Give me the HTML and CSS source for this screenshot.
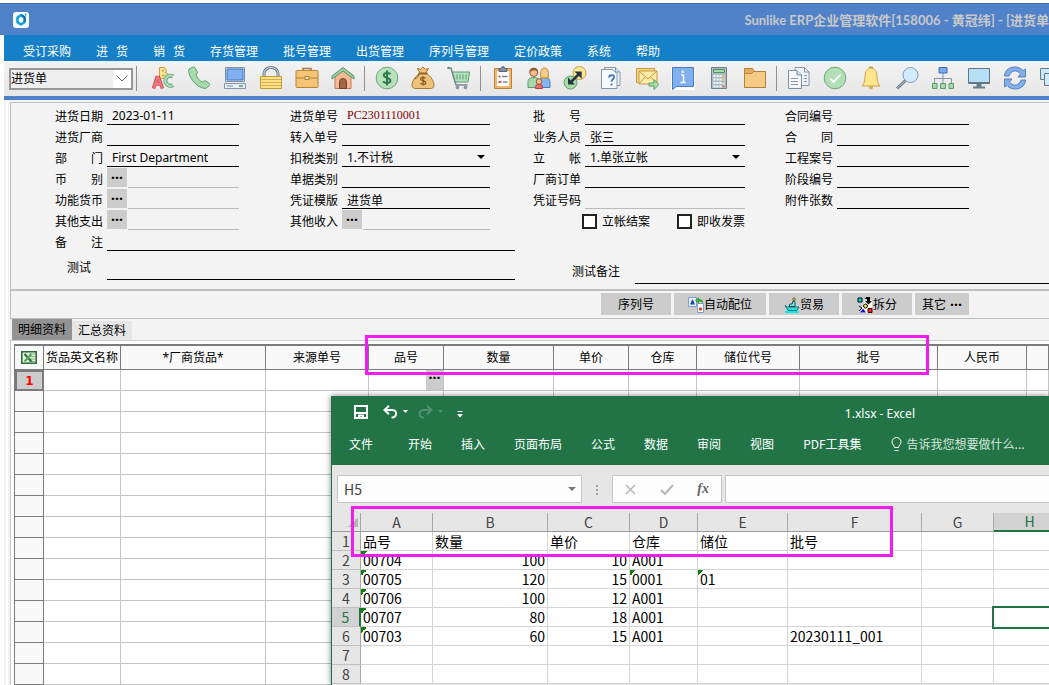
FILE: index.html
```html
<!DOCTYPE html>
<html lang="zh-CN">
<head>
    <meta charset="UTF-8">
    <meta name="viewport" content="width=device-width, initial-scale=1.0">
    <title>Sunlike ERP - 进货单</title>
    <link rel="stylesheet" href="styles.css">
</head>
<body>
    <header class="titlebar">
        <svg class="app-logo" viewBox="0 0 16 16">
            <rect width="16" height="16" rx="3" fill="#f4fcff"/>
            <path d="M8 3.2 11.500 5.500v4.700L8 12.500 4.500 10.200V5.500Z" fill="none" stroke="#18a0d8" stroke-width="2.600" stroke-linejoin="round"/>
            <path d="M8.500 3 11.800 5.200v4.500" fill="none" stroke="#1667b8" stroke-width="1.800"/>
            <circle cx="12.600" cy="2.600" r="1.100" fill="#25b8c8"/>
        </svg>
        <span class="titlebar-text">Sunlike ERP企业管理软件[158006 - 黄冠纬] - [进货单</span>
    </header>

    <div class="workspace">
        <nav class="menu">
            <button>受订采购</button>
            <button class="spread">进 货</button>
            <button class="spread">销 货</button>
            <button>存货管理</button>
            <button>批号管理</button>
            <button>出货管理</button>
            <button>序列号管理</button>
            <button>定价政策</button>
            <button>系统</button>
            <button>帮助</button>
        </nav>

        <div class="toolbar">
            <div class="module-select">
                <select aria-label="单据"><option>进货单</option></select>
                <svg viewBox="0 0 12 7"><path d="M.5.5 6 6 11.500.5" fill="none" stroke="#666"/></svg>
            </div>
            <span class="sep"></span>
            <button class="tool" aria-label="拼写">
                <svg viewBox="0 0 24 24" fill="none" stroke-linejoin="round">
                    <path d="M8.500 1.500h4.500a2.800 2.800 0 0 1 1 5 3 3 0 0 1-.5 6H8.500Z" fill="#fbe596" stroke="#caa03c"/>
                    <path d="M11 4.500h2M11 9.500h2.500" stroke="#caa03c" stroke-width="1.500"/>
                    <path d="M22 10.500a5 5 0 1 0 0 8.500" stroke="#5fa777" stroke-width="4"/>
                    <path d="M22 10.500a5 5 0 1 0 0 8.500" stroke="#b5dfba" stroke-width="2"/>
                    <path d="M2.500 22.500 6.500 10M11.500 22.500 7 10M4.500 18H10" stroke="#c94b58" stroke-width="3.600"/>
                    <path d="M2.700 22 6.600 10.500M11.200 22 7 10.500M4.500 18H10" stroke="#f07a80" stroke-width="1.800"/>
                </svg>
            </button>
            <button class="tool" aria-label="电话">
                <svg viewBox="0 0 24 24"><path d="M5 1.500 2 3C0 8 8 22 18.500 22.500L22 20c1-1 .8-2-.2-3l-3-2c-1.300-.8-2.200.2-3 1.200-3-1-6-4.500-6.800-8 1-.4 1.700-1.200 1.300-2.500L8.200 2.200C7.500.8 6 .8 5 1.500Z" fill="#a6dbae" stroke="#5f9f74"/></svg>
            </button>
            <button class="tool" aria-label="电脑">
                <svg viewBox="0 0 24 24">
                    <path d="M2.500 1.500h19v14h-19Z" fill="#dfe8f3" stroke="#7c8ea8"/>
                    <path d="M4 3h16v11H4Z" fill="#7fb1f2" stroke="#3f74bd"/>
                    <path d="M1.500 17.500h21v5h-21Z" fill="#e7edf5" stroke="#8495ac"/>
                    <path d="M4 20h6" stroke="#7788a0"/><path d="M16 20h4" stroke="#57a365" stroke-width="1.500"/>
                </svg>
            </button>
            <button class="tool" aria-label="锁定">
                <svg viewBox="0 0 24 24">
                    <path d="M5 11V7.500a7 6 0 0 1 14 0V11" fill="none" stroke="#6d7f8f" stroke-width="3"/>
                    <path d="M5 11V7.500a7 6 0 0 1 14 0V11" fill="none" stroke="#d5e2ec"/>
                    <path d="M1.500 10.500h21v12h-21Z" fill="#ffe18c" stroke="#c49a38"/>
                    <path d="M2 13.500h20M2 16.500h20M2 19.500h20" stroke="#d9ac4a"/>
                </svg>
            </button>
            <button class="tool" aria-label="公文包">
                <svg viewBox="0 0 24 24">
                    <path d="M8 5V2.500h8V5" fill="none" stroke="#a77a39" stroke-width="1.500"/>
                    <rect x="1" y="4.500" width="22" height="17" rx="1" fill="#f4c477" stroke="#b58236"/>
                    <path d="M1 12h22" stroke="#b58236"/><path d="M10 10.500h4v3h-4Z" fill="#fff0b9" stroke="#a77a39"/>
                </svg>
            </button>
            <button class="tool" aria-label="首页">
                <svg viewBox="0 0 24 24">
                    <path d="M4 10 12 3.500 20 10V22.500H4Z" fill="#f7b894" stroke="#c67855"/>
                    <path d="M8.500 22.500V16a3.500 3.500 0 0 1 7 0v6.500Z" fill="#a16845" stroke="#70452f"/>
                    <path d="M1 10 12 1.500 23 10v3L12 5 1 13Z" fill="#9bd0a4" stroke="#5c946a"/>
                </svg>
            </button>
            <span class="sep"></span>
            <button class="tool" aria-label="货款">
                <svg viewBox="0 0 24 24">
                    <circle cx="12" cy="12" r="10.800" fill="#b9e2bb" stroke="#66a87b"/>
                    <path d="M15.500 8.200C14.500 6.500 8.800 6.200 8.800 9.200c0 3 6.600 2 6.600 5.400 0 3.200-6 3-7.200.6M12 4.500v15" fill="none" stroke="#2f7a50" stroke-width="2"/>
                </svg>
            </button>
            <button class="tool" aria-label="费用">
                <svg viewBox="0 0 24 24">
                    <path d="M9 7 6.500 2.500l3 .8L12 1l2.500 2.300 3-.8L15 7c3 2 8 7 8 12 0 3-2 3.500-4 3.500H5c-2 0-4-.5-4-3.500 0-5 5-10 8-12Z" fill="#efc27a" stroke="#a87835"/>
                    <path d="M7.500 7.500h9" stroke="#946426" stroke-width="2"/><path d="M8 8c-1 3-2 4-4 5" fill="none" stroke="#7c552a"/>
                    <path d="M14.500 12.300c-1-1.300-5-1.200-5 .8s5.200 1.200 5.200 3.600c0 2.100-4.200 2-5.400.4M12 10v9.500" fill="none" stroke="#885b24" stroke-width="1.300"/>
                </svg>
            </button>
            <button class="tool" aria-label="购物车">
                <svg viewBox="0 0 24 24">
                    <path d="M5 6h17.500l-1.500 10H8Z" fill="#b6e1bd" stroke="#5b9f70"/>
                    <path d="M10 8.500v5M13 8.500v5M16 8.500v5M19 8.500v5" stroke="#5b9f70"/>
                    <path d="M1 2h3l5 17h11.500" fill="none" stroke="#778895" stroke-width="1.500"/><circle cx="1.500" cy="2" r="1.300" fill="#5b9f70"/>
                    <circle cx="10.500" cy="21.500" r="1.800" fill="#8695a3"/><circle cx="18.500" cy="21.500" r="1.800" fill="#8695a3"/>
                </svg>
            </button>
            <span class="sep"></span>
            <button class="tool" aria-label="清单">
                <svg viewBox="0 0 24 24">
                    <path d="M3.500 2.500h17v20h-17Z" fill="#f2b66d" stroke="#bd813b"/><path d="M6 5h12v15H6Z" fill="#fff"/>
                    <path d="M8 2.500h2L11 .8h2l1 1.700h2v3H8Z" fill="#8293a8" stroke="#56677e"/>
                    <path d="M7.500 10.500h2M7.500 16h3" stroke="#dc5a50" stroke-width="2"/><path d="M11 10.500h5.500M12 16h4.500" stroke="#7485a0" stroke-width="1.300"/>
                </svg>
            </button>
            <button class="tool" aria-label="人员">
                <svg viewBox="0 0 24 24">
                    <path d="M1 21.500v-6c0-3 3-4 6-4s5 1 5 4v6Z" fill="#a5d8aa" stroke="#5a9c6b"/>
                    <path d="M12.500 21.500v-6c0-3 2-4 5-4s5.500 1 5.500 4v6Z" fill="#86b4ef" stroke="#4f7bb8"/>
                    <path d="M14 12c-1-6 0-10 3.500-10S22 6 21 12Z" fill="#f4ce64" stroke="#b88b30"/>
                    <circle cx="6.800" cy="6.500" r="4" fill="#f5bc93" stroke="#9a5c35"/><path d="M2.500 7C1.500 0 12 0 11 7L9 4.500H5Z" fill="#955b37"/>
                    <circle cx="17.500" cy="7" r="3" fill="#f8c9a2"/>
                    <path d="M8.500 22.500c0-4 1.500-4.500 3.500-4.500s3.500.5 3.500 4.500Z" fill="#e76f6f" stroke="#af4048"/>
                    <circle cx="12" cy="15.500" r="2.800" fill="#f5bc93" stroke="#9a5c35"/>
                </svg>
            </button>
            <button class="tool" aria-label="转换">
                <svg viewBox="0 0 24 24">
                    <circle cx="16.500" cy="7" r="6.500" fill="#fbe695" stroke="#c6a14b"/><circle cx="7.500" cy="16.500" r="6.500" fill="#a9dcad" stroke="#5fa172"/>
                    <path d="M8 16 16 8" stroke="#27363f" stroke-width="2.500"/><path d="M11.500 5.500h7.200v7.200ZM5 11.500v7h7Z" fill="#27363f"/>
                </svg>
            </button>
            <button class="tool" aria-label="说明">
                <svg viewBox="0 0 24 24">
                    <path d="M5.500 1.500h11l4.500 4.500v13.500H5.500Z" fill="#edf3f9" stroke="#8496aa"/><path d="M2.500 3.500h11l4.500 4v15H2.500Z" fill="#f6f9fd" stroke="#8496aa"/><path d="M16.500 1.500V6H21" fill="#d5e1ed" stroke="#8496aa"/>
                    <path d="M10 11.500c.3-3.500 6-3 5 .2-.5 1.500-2.500 1.700-2.500 4M12.500 17.500v2" fill="none" stroke="#4174c6" stroke-width="1.800"/>
                </svg>
            </button>
            <button class="tool" aria-label="邮件">
                <svg viewBox="0 0 24 24">
                    <path d="M1.500 2.500h18v14h-18Z" fill="#f8d67e" stroke="#c69b44"/><path d="M4 5h18v13H4Z" fill="#ffebaa" stroke="#c69b44"/>
                    <path d="m4 5 9 8 9-8M4 18l6-7M22 18l-6-7" fill="none" stroke="#c69b44"/>
                    <path d="M14 17h5v-3.500l5 5-5 5V20h-5Z" fill="#a8dda8" stroke="#5aa068"/>
                </svg>
            </button>
            <button class="tool" aria-label="信息">
                <svg viewBox="0 0 24 24">
                    <path d="M0 1h24v23H0Z" fill="#fff"/><path d="M1.500 1.500h21v19H5.500l-4 3Z" fill="#80b1ee" stroke="#447cc5"/>
                    <path d="M10 9h2.500v7M9.500 16.500h5" fill="none" stroke="#fff" stroke-width="1.500"/><circle cx="11.800" cy="5.800" r="1.200" fill="#fff"/>
                </svg>
            </button>
            <button class="tool" aria-label="计算器">
                <svg viewBox="0 0 24 24">
                    <path d="M4.500 1.500h15v21h-15Z" fill="#acbdc9" stroke="#6c7f8d"/><path d="M6.500 3.500h11v3h-11Z" fill="#a7dba4" stroke="#568f61"/>
                    <path d="M6.500 10h11M6.500 13.500h11M6.500 17h11M6.500 20.500h11" stroke="#f4f8fa" stroke-width="2" stroke-dasharray="2 1"/>
                    <path d="M16.500 9v8" stroke="#e9b84c" stroke-width="2" stroke-dasharray="2 1.500"/><path d="M16.500 19.500v2" stroke="#e0604f" stroke-width="2"/>
                </svg>
            </button>
            <button class="tool" aria-label="文件夹">
                <svg viewBox="0 0 24 24"><path d="M1.500 21.500v-19h8l2 3h11v16Z" fill="#e6ad5c" stroke="#b37f3c"/><path d="M1.500 7.500h7l2-2h12v16h-21Z" fill="#f5ca83" stroke="#b37f3c"/></svg>
            </button>
            <span class="sep"></span>
            <button class="tool" aria-label="复制">
                <svg viewBox="0 0 24 24">
                    <path d="M8 1.500h9.500L22 6v13.500H8Z" fill="#edf3fa" stroke="#8496aa"/><path d="M17.500 1.500V6H22" fill="none" stroke="#8496aa"/>
                    <path d="M1.500 4.500H10l4.500 4.500v13.500h-13Z" fill="#f5f9fd" stroke="#7c8fa4"/><path d="M10 4.500V9h4.500" fill="#d5e1ed" stroke="#7c8fa4"/>
                    <path d="M4 12.500h7M4 15.500h7M4 18.500h7M17 9.500h3M17 12.500h3M17 15.500h3" stroke="#8799ab"/>
                </svg>
            </button>
            <button class="tool" aria-label="审核">
                <svg viewBox="0 0 24 24"><circle cx="12" cy="12" r="10.800" fill="#b2dfb5" stroke="#69aa7c"/><path d="m7 12.500 3.500 3.500L17.500 8.500" fill="none" stroke="#fff" stroke-width="1.800"/></svg>
            </button>
            <button class="tool" aria-label="提醒">
                <svg viewBox="0 0 24 24"><circle cx="12" cy="21.500" r="2" fill="#dcad45"/><path d="M12 1.500c-4 1-6 4-6 9 0 5-1 7-3 9.500h18c-2-2.500-3-4.500-3-9.500 0-5-2-8-6-9Z" fill="#ffe58b" stroke="#cba14a"/><path d="M10 1.500h4" stroke="#cba14a" stroke-width="2"/></svg>
            </button>
            <button class="tool" aria-label="查找">
                <svg viewBox="0 0 24 24"><path d="m11 14-9 8.500" stroke="#667b8d" stroke-width="3"/><path d="m11 14-9 8.500" stroke="#b7c6d2"/><circle cx="15.500" cy="9" r="7.500" fill="#d0ecfd" stroke="#7e9db7"/></svg>
            </button>
            <button class="tool" aria-label="组织">
                <svg viewBox="0 0 24 24"><path d="M12 7v10M3.500 17v-4.500h17V17" fill="none" stroke="#8595a3"/><path d="M8 1.500h8v5.500H8Z" fill="#79a9ec" stroke="#426fb0"/><path d="M1.500 17.500h4.500v5H1.500ZM9.500 17.500h5v5h-5ZM18 17.500h4.500v5H18Z" fill="#a6d9aa" stroke="#5b9a6b"/></svg>
            </button>
            <button class="tool" aria-label="显示">
                <svg viewBox="0 0 24 24"><path d="M9.500 18h5v3h-5Z" fill="#697d8b"/><path d="M6 21.500h12" stroke="#697d8b" stroke-width="2"/><path d="M1.500 2.500h21v15h-21Z" fill="#b7e0f7" stroke="#607788"/><path d="M2 17h20" stroke="#607788" stroke-width="2"/></svg>
            </button>
            <button class="tool" aria-label="刷新">
                <svg viewBox="0 0 24 24" fill="#83aeea" stroke="#426fb1" stroke-width=".8"><path d="M1.500 10C2 0 15-1.500 20 4.500L22.500 3v8H15l2.500-3C13 2.500 7.500 5 6 10Z"/><path d="M22.500 14C22 24 9 25.500 4 19.500L1.500 21v-8H9l-2.500 3c4.500 5.500 10 3 11.500-2Z"/></svg>
            </button>
            <button class="tool" aria-label="窗口">
                <svg viewBox="0 0 24 24" fill="#cdeaf8" stroke="#647b8c"><path d="M1.500 2.500h17v11h-17Z"/><path d="M5.500 7.500h17v12h-17Z"/><path d="M10 22h9" stroke-width="2"/></svg>
            </button>
        </div>

        <main class="content">
            <form class="panel">
                <div class="fields">
                    <div class="field-group">
                        <div class="row"><label for="date">进货日期</label><input id="date" value="2023-01-11"></div>
                        <div class="row"><label for="vendor">进货厂商</label><input id="vendor"></div>
                        <div class="row"><label for="dept">部 门</label><input id="dept" value="First Department"></div>
                        <div class="row"><label for="cur">币 别</label><button type="button" class="dots">···</button><input id="cur" disabled></div>
                        <div class="row"><label for="fcur">功能货币</label><button type="button" class="dots">···</button><input id="fcur" disabled></div>
                        <div class="row"><label for="expense">其他支出</label><button type="button" class="dots">···</button><input id="expense" disabled></div>
                    </div>
                    <div class="field-group group-wide">
                        <div class="row"><label for="billno">进货单号</label><input id="billno" class="bill-no" value="PC2301110001"></div>
                        <div class="row"><label for="transfer">转入单号</label><input id="transfer"></div>
                        <div class="row"><label for="tax">扣税类别</label><select id="tax"><option>1.不计税</option></select><span class="caret"></span></div>
                        <div class="row"><label for="billtype">单据类别</label><input id="billtype"></div>
                        <div class="row"><label for="template">凭证模版</label><input id="template" value="进货单"></div>
                        <div class="row"><label for="income">其他收入</label><button type="button" class="dots">···</button><input id="income" disabled></div>
                    </div>
                    <div class="field-group group-wider">
                        <div class="row"><label for="batch">批 号</label><input id="batch"></div>
                        <div class="row"><label for="staff">业务人员</label><input id="staff" value="张三"></div>
                        <div class="row"><label for="account">立 帐</label><select id="account"><option>1.单张立帐</option></select><span class="caret"></span></div>
                        <div class="row"><label for="order">厂商订单</label><input id="order"></div>
                        <div class="row"><label for="voucher">凭证号码</label><input id="voucher" disabled></div>
                        <div class="checks">
                            <label><input type="checkbox">立帐结案</label>
                            <label><input type="checkbox">即收发票</label>
                        </div>
                    </div>
                    <div class="field-group">
                        <div class="row"><label for="contract">合同编号</label><input id="contract"></div>
                        <div class="row"><label for="contract2">合 同</label><input id="contract2"></div>
                        <div class="row"><label for="project">工程案号</label><input id="project"></div>
                        <div class="row"><label for="stage">阶段编号</label><input id="stage"></div>
                        <div class="row"><label for="attach">附件张数</label><input id="attach"></div>
                    </div>
                </div>
                <div class="notes">
                    <div class="notes-left">
                        <div class="row"><label for="remark">备 注</label><input id="remark"></div>
                        <div class="row tall"><label for="test" class="center">测试</label><input id="test"></div>
                    </div>
                    <div class="notes-right row"><label for="testremark">测试备注</label><input id="testremark"></div>
                </div>
            </form>

            <div class="actions">
                <button>序列号</button>
                <button class="with-icon">
                    <svg viewBox="0 0 16 16">
                        <path d="M.5.5h8v9h-8Z" fill="#e7f1ff" stroke="#7e9fd0"/><path d="M4.500 2 7 7.500H2Z" fill="#1947a8"/>
                        <path d="M9.500 6.500h6v9h-6Z" fill="#fff" stroke="#7e9fd0"/><circle cx="12.500" cy="12" r="1.800" fill="#e5482d"/>
                        <path d="M7 3.500 11 0v2c3 0 4.500 2 4 4.500C14 5 13 4.500 11 5v2Z" fill="#38a638"/>
                    </svg>自动配位</button>
                <button>
                    <svg viewBox="0 0 16 16">
                        <path d="M1 15h14" stroke="#0ee" stroke-width="2"/><path d="M1 8.500 3.500 10H15l-2 3.500H4Z" fill="#3dd" stroke="#187878"/>
                        <path d="M5 9.500 6 7h2l1-3 2 1v4.500Z" fill="#5ee" stroke="#222" stroke-width=".8"/><path d="M9 3.500V1h2v3Z" fill="#ee3" stroke="#222" stroke-width=".6"/>
                    </svg>贸易</button>
                <button>
                    <svg viewBox="0 0 16 16">
                        <path d="M8 3h7v13H3Z" fill="#fff"/><path d="M1 1h4v4H1Z" fill="#0dd" stroke="#000"/><path d="M9 0h4v4h2l-3.500 3.500L8 4h2V2H8Z" fill="#000"/>
                        <path d="M2 9l3 2-3 3" fill="none" stroke="#000"/><circle cx="8.500" cy="9" r="2" fill="#ee3" stroke="#000"/>
                        <path d="m6 11.500 3 4H3Z" fill="#11c"/><path d="M11 11.500h4v4h-4Z" fill="#e22" stroke="#400"/>
                    </svg>拆分</button>
                <button class="narrow">其它 <b>···</b></button>
            </div>

            <div class="tabs">
                <button class="active">明细资料</button>
                <button>汇总资料</button>
            </div>

            <div class="grid-wrap">
                <table class="grid">
                    <colgroup>
                        <col class="g-no"><col class="g-name"><col class="g-vendor"><col class="g-source"><col class="g-item"><col class="g-qty">
                        <col class="g-price"><col class="g-store"><col class="g-slot"><col class="g-batch"><col class="g-cny"><col>
                    </colgroup>
                    <thead>
                        <tr>
                            <th><svg class="xls" viewBox="0 0 16 13"><path d="M.8.8h14.400v11.400H.8Z" fill="#e8f3e3" stroke="#2f6b35" stroke-width="1.600"/><path d="M8 3h6M8 5.500h6M8 8h6M8 10.500h6" stroke="#7fae82"/><path d="m3.500 3 7 7.500" stroke="#2f7b3a" stroke-width="2.400"/><path d="m10.500 3-7 7.500" stroke="#5aa860" stroke-width="2"/></svg></th>
                            <th>货品英文名称</th><th>*厂商货品*</th><th>来源单号</th><th>品号</th><th>数量</th><th>单价</th><th>仓库</th><th>储位代号</th><th>批号</th><th>人民币</th><th></th>
                        </tr>
                    </thead>
                    <tbody>
                        <tr><th class="current">1</th><td></td><td></td><td></td><td><button class="cell-dots">···</button></td><td></td><td></td><td></td><td></td><td></td><td></td><td></td></tr>
                        <tr><th></th><td></td><td></td><td></td><td></td><td></td><td></td><td></td><td></td><td></td><td></td><td></td></tr>
                        <tr><th></th><td></td><td></td><td></td><td></td><td></td><td></td><td></td><td></td><td></td><td></td><td></td></tr>
                        <tr><th></th><td></td><td></td><td></td><td></td><td></td><td></td><td></td><td></td><td></td><td></td><td></td></tr>
                        <tr><th></th><td></td><td></td><td></td><td></td><td></td><td></td><td></td><td></td><td></td><td></td><td></td></tr>
                        <tr><th></th><td></td><td></td><td></td><td></td><td></td><td></td><td></td><td></td><td></td><td></td><td></td></tr>
                        <tr><th></th><td></td><td></td><td></td><td></td><td></td><td></td><td></td><td></td><td></td><td></td><td></td></tr>
                        <tr><th></th><td></td><td></td><td></td><td></td><td></td><td></td><td></td><td></td><td></td><td></td><td></td></tr>
                        <tr><th></th><td></td><td></td><td></td><td></td><td></td><td></td><td></td><td></td><td></td><td></td><td></td></tr>
                        <tr><th></th><td></td><td></td><td></td><td></td><td></td><td></td><td></td><td></td><td></td><td></td><td></td></tr>
                        <tr><th></th><td></td><td></td><td></td><td></td><td></td><td></td><td></td><td></td><td></td><td></td><td></td></tr>
                        <tr><th></th><td></td><td></td><td></td><td></td><td></td><td></td><td></td><td></td><td></td><td></td><td></td></tr>
                        <tr><th></th><td></td><td></td><td></td><td></td><td></td><td></td><td></td><td></td><td></td><td></td><td></td></tr>
                        <tr><th></th><td></td><td></td><td></td><td></td><td></td><td></td><td></td><td></td><td></td><td></td><td></td></tr>
                        <tr><th></th><td></td><td></td><td></td><td></td><td></td><td></td><td></td><td></td><td></td><td></td><td></td></tr>
                    </tbody>
                </table>
            </div>
        </main>
    </div>

    <!-- Excel window on top of the ERP form -->
    <section class="excel">
        <div class="excel-title">
            <button aria-label="保存"><svg width="14" height="14" viewBox="0 0 14 14" fill="none" stroke="#fff" stroke-width="2"><path d="M1 1h12v12H1ZM1 8h12M5 13v-2.500h4V13"/></svg></button>
            <button class="undo" aria-label="撤销"><svg width="26" height="14" viewBox="0 0 26 14"><path d="M6 .8 1.500 5 6 9.200M2 5h7.500c5 0 5 7.500-1 7.500" fill="none" stroke="#fff" stroke-width="2"/><path d="M20 5h5l-2.500 3Z" fill="#fff"/></svg></button>
            <button class="redo" aria-label="恢复"><svg width="26" height="14" viewBox="0 0 26 14"><path d="M9 .8 13.500 5 9 9.200M13 5H6C0 5 0 12.500 6 12.500" fill="none" stroke="#4f9070" stroke-width="2"/><path d="M20 5h5l-2.500 3Z" fill="#4f9070"/></svg></button>
            <button class="more" aria-label="自定义"><svg width="6" height="14" viewBox="0 0 6 14"><path d="M.5 6.500h5" stroke="#fff"/><path d="M0 9h6l-3 3.500Z" fill="#fff"/></svg></button>
            <span class="excel-name">1.xlsx - Excel</span>
        </div>
        <nav class="ribbon">
            <button class="file">文件</button>
            <button>开始</button>
            <button>插入</button>
            <button>页面布局</button>
            <button>公式</button>
            <button>数据</button>
            <button>审阅</button>
            <button>视图</button>
            <button>PDF工具集</button>
            <button class="tell-me"><svg width="11" height="15" viewBox="0 0 11 15"><path d="M3.500 10.500C3.500 8.500 1 7.500 1 5a4.500 4.500 0 0 1 9 0c0 2.500-2.500 3.500-2.500 5.500ZM3.500 13.500h4" fill="none" stroke="#fff"/></svg>告诉我您想要做什么...</button>
        </nav>
        <div class="formula-row">
            <div class="name-box"><input aria-label="名称框" value="H5"><span class="caret"></span></div>
            <span class="grip"></span>
            <div class="fx-box">
                <svg width="11" height="11" viewBox="0 0 11 11"><path d="m1 1 9 9M10 1l-9 9" stroke="#b8b8b8" stroke-width="1.500"/></svg>
                <svg width="14" height="11" viewBox="0 0 14 11"><path d="m1 6 4 4 8-9" fill="none" stroke="#b8b8b8" stroke-width="2.200"/></svg>
                <i>fx</i>
            </div>
            <input class="formula" aria-label="编辑栏">
        </div>
        <table class="sheet">
            <colgroup>
                <col class="s-no"><col class="s-a"><col class="s-b"><col class="s-c"><col class="s-d"><col class="s-e"><col class="s-f"><col class="s-g"><col>
            </colgroup>
            <thead>
                <tr><th class="corner"></th><th>A</th><th>B</th><th>C</th><th>D</th><th>E</th><th>F</th><th>G</th><th class="sel">H</th></tr>
            </thead>
            <tbody>
                <tr><th>1</th><td>品号</td><td>数量</td><td>单价</td><td>仓库</td><td>储位</td><td>批号</td><td></td><td></td></tr>
                <tr><th>2</th><td class="txt">00704</td><td class="num">100</td><td class="num">10</td><td>A001</td><td></td><td></td><td></td><td></td></tr>
                <tr><th>3</th><td class="txt">00705</td><td class="num">120</td><td class="num">15</td><td class="txt">0001</td><td class="txt">01</td><td></td><td></td><td></td></tr>
                <tr><th>4</th><td class="txt">00706</td><td class="num">100</td><td class="num">12</td><td>A001</td><td></td><td></td><td></td><td></td></tr>
                <tr><th class="sel">5</th><td class="txt">00707</td><td class="num">80</td><td class="num">18</td><td>A001</td><td></td><td></td><td></td><td class="cursor"></td></tr>
                <tr><th>6</th><td class="txt">00703</td><td class="num">60</td><td class="num">15</td><td>A001</td><td></td><td>20230111_001</td><td></td><td></td></tr>
                <tr><th>7</th><td></td><td></td><td></td><td></td><td></td><td></td><td></td><td></td></tr>
                <tr><th>8</th><td></td><td></td><td></td><td></td><td></td><td></td><td></td><td></td></tr>
            </tbody>
        </table>
    </section>

    <!-- marked header ranges -->
    <div class="mark mark-grid"></div>
    <div class="mark mark-sheet"></div>
</body>
</html>
```

FILE: styles.css
```css
* {
    box-sizing: border-box;
}
body {
    position: relative;
    margin: 0;
    padding-top: 3px;
    height: 100vh;
    overflow: hidden;
    background: #fff;
    color: #000;
    font-family: "Noto Sans", "Noto Sans CJK SC", sans-serif;
    font-size: 12px;
    line-height: 16px;
}
button, input, select {
    margin: 0;
    padding: 0;
    border: none;
    border-radius: 0;
    background: none;
    color: inherit;
    font: inherit;
}
button {
    white-space: nowrap;
}
select {
    appearance: none;
}

/* title bar and menu */
.titlebar {
    display: flex;
    align-items: center;
    height: 32px;
    padding-left: 13px;
    border-top: 1px solid #3c6cb0;
    background: #5082c9;
}
.app-logo {
    width: 16px;
    height: 16px;
}
.titlebar-text {
    margin-left: auto;
    color: #c8c8c8;
    font-family: Lato, "Noto Sans CJK SC", sans-serif;
    font-size: 13px;
    font-weight: bold;
    white-space: nowrap;
}
.workspace {
    margin-left: 2px;
    border-left: 2px solid #fff;
    background: #f3f3f3;
}
.menu {
    display: flex;
    gap: 25px;
    height: 26px;
    padding: 8px 0 0 19px;
    background: #1580c8;
    color: #fff;
}
.menu button {
    height: 18px;
}
.menu .spread {
    width: 32px;
    text-align-last: justify;
}

/* toolbar */
.toolbar {
    display: flex;
    align-items: center;
    height: 39px;
    padding-left: 5px;
    border-bottom: 4px solid #5082c9;
    background: linear-gradient(#f3f3f3, #e6e6e6);
    overflow: hidden;
}
.module-select {
    position: relative;
    flex: none;
    width: 124px;
    height: 22px;
    border: 2px solid #979797;
    background: #fff;
}
.module-select select {
    width: 102px;
    height: 18px;
    background: #efefef;
}
.module-select svg {
    position: absolute;
    top: 5px;
    right: 3px;
    width: 12px;
    height: 7px;
}
.sep {
    position: relative;
    flex: none;
    width: 8px;
    height: 25px;
    background: linear-gradient(#909090, #909090) 3px 0 / 1px 25px no-repeat;
}
.module-select + .sep {
    width: 12px;
}
.tool {
    display: flex;
    flex: none;
    justify-content: center;
    width: 36px;
    height: 26px;
}
.tool svg {
    width: 24px;
    height: 24px;
}

/* entry form */
.content {
    margin-left: 2px;
    padding: 2px 0 0 2px;
    border-left: 2px solid #fff;
}
.panel {
    border: 1px solid #bfbfbf;
    border-right: none;
    border-bottom-width: 2px;
    padding: 1px 0 5px 44px;
}
.fields {
    display: grid;
    grid-template-columns: 235px 243px 252px 184px;
}
.field-group {
    width: 184px;
}
.group-wide {
    width: 200px;
}
.group-wider {
    width: 212px;
}
.row {
    position: relative;
    display: flex;
    align-items: flex-end;
    height: 21px;
}
.row label {
    flex: none;
    width: 48px;
    margin-right: 4px;
    text-align-last: justify;
}
.row label.center {
    text-align-last: center;
}
.row input, .row select {
    flex: 1;
    min-width: 0;
    height: 20px;
    padding: 2px 0 0 5px;
    border-bottom: 1px solid #000;
}
.row input:disabled {
    border-bottom-color: #bbb;
}
.row .bill-no {
    color: #800000;
    font-family: "Liberation Serif", serif;
}
.dots {
    width: 20px;
    height: 19px;
    margin: 0 1px 1px 0;
    background: #ccc;
    font-size: 14px;
    font-weight: bold;
    line-height: 16px;
}
.caret {
    position: absolute;
    right: 5px;
    bottom: 8px;
    border: 4px solid transparent;
    border-top-color: #000;
    border-bottom: none;
}
.checks {
    display: flex;
    gap: 27px;
    height: 21px;
    padding: 5px 0 0 49px;
}
.checks label {
    display: flex;
    align-items: center;
    gap: 5px;
    height: 15px;
    white-space: nowrap;
}
.checks input {
    appearance: none;
    width: 15px;
    height: 15px;
    border: 2px solid #222;
    background: #fff;
}
.notes {
    display: flex;
}
.notes-left {
    width: 460px;
    margin-right: 57px;
}
.row.tall {
    height: 29px;
}
.tall label {
    padding-bottom: 4px;
}
.notes-right {
    flex: 1;
    height: 54px;
}
.notes-right label {
    margin-right: 15px;
    padding-bottom: 4px;
}

.actions {
    display: flex;
    justify-content: flex-end;
    gap: 3px;
    height: 28px;
    padding: 2px 80px 0 0;
    border-left: 1px solid #bfbfbf;
    border-bottom: 1px solid #bfbfbf;
}
.actions button {
    display: flex;
    align-items: center;
    justify-content: center;
    width: 70px;
    height: 22px;
    padding-top: 2px;
    background: #ccc;
}
.actions .with-icon {
    width: 92px;
}
.actions .narrow {
    width: 54px;
    gap: 4px;
}
.actions b {
    font-size: 14px;
}
.actions svg {
    width: 16px;
    height: 16px;
}

/* detail grid */
.tabs {
    display: flex;
    align-items: flex-end;
    padding-left: 2px;
    height: 21px;
}
.tabs button {
    width: 60px;
    height: 19px;
    background: #e6e6e6;
}
.tabs .active {
    height: 21px;
    background: #929292;
}
.grid-wrap {
    padding: 3px 0 0 3px;
    border-top: 1px solid #ccc;
    border-left: 1px solid #ccc;
    background: #fff;
}
.grid {
    width: 100%;
    table-layout: fixed;
    border-spacing: 0;
    border-top: 2px solid #7b7b7b;
    border-left: 1px solid #7b7b7b;
}
.grid th, .grid td {
    height: 21px;
    padding: 0;
    border-right: 1px solid #c4c4c4;
    border-bottom: 1px solid #c4c4c4;
}
.grid th {
    border-color: #7b7b7b;
    background: #f9f9f9;
    font-weight: normal;
    white-space: nowrap;
}
.grid thead th {
    height: 24px;
}
.grid .current {
    border: 2px solid #7b7b7b;
    background: #ccc;
    color: #f00;
    font-family: "DejaVu Sans", sans-serif;
    font-weight: bold;
}
.grid .xls {
    display: block;
    width: 16px;
    height: 13px;
    margin: 0 auto;
}
.cell-dots {
    display: block;
    width: 17px;
    height: 20px;
    margin-left: auto;
    padding-bottom: 4px;
    background: #ccc;
    font-size: 14px;
    font-weight: bold;
}
.g-no { width: 29px; }
.g-name { width: 77px; }
.g-vendor { width: 145px; }
.g-source { width: 103px; }
.g-item { width: 75px; }
.g-qty { width: 110px; }
.g-price { width: 75px; }
.g-store { width: 68px; }
.g-slot { width: 103px; }
.g-batch { width: 138px; }
.g-cny { width: 89px; }

/* excel window */
.excel {
    position: absolute;
    top: 396px;
    right: 0;
    bottom: 0;
    left: 331px;
    overflow: hidden;
    border-left: 1px solid #217346;
    background: #e6e6e6;
    box-shadow: 0 0 6px rgba(0,0,0,0.5);
    font-family: "Noto Sans CJK SC", sans-serif;
}
.excel-title {
    display: flex;
    align-items: center;
    height: 34px;
    padding: 0 134px 2px 22px;
    background: #227447;
    color: #fff;
}
.excel-title svg {
    display: block;
}
.excel-title .undo {
    margin-left: 15px;
}
.excel-title .redo {
    margin-left: 9px;
}
.excel-title .more {
    margin-left: 13px;
}
.excel-name {
    margin-left: auto;
    padding-top: 4px;
    font-family: "Noto Sans", sans-serif;
}
.ribbon {
    display: flex;
    align-items: flex-start;
    gap: 29px;
    height: 35px;
    padding: 4px 0 0 17px;
    background: #227447;
    color: #fff;
}
.ribbon button {
    height: 20px;
}
.ribbon .file {
    margin-right: 6px;
}
.ribbon .tell-me {
    display: flex;
    align-items: center;
    gap: 5px;
    color: #d5e6dc;
}
.formula-row {
    display: flex;
    padding-top: 10px;
    padding-left: 5px;
    height: 48px;
}
.name-box, .fx-box, .formula {
    height: 28px;
    border: 1px solid #c6c6c6;
    background: #fdfdfd;
}
.name-box {
    position: relative;
    flex: none;
    width: 245px;
}
.name-box input {
    width: 220px;
    height: 26px;
    padding-left: 6px;
    color: #444;
    font-size: 14px;
}
.name-box .caret {
    bottom: 11px;
    border-top-color: #777;
}
.grip {
    flex: none;
    width: 30px;
    background: radial-gradient(#a0a0a0 1px, transparent 1px) 13px 9px / 4px 4px no-repeat, radial-gradient(#a0a0a0 1px, transparent 1px) 13px 13px / 4px 4px no-repeat, radial-gradient(#a0a0a0 1px, transparent 1px) 13px 17px / 4px 4px no-repeat;
}
.fx-box {
    display: flex;
    flex: none;
    align-items: center;
    justify-content: space-between;
    width: 110px;
    margin-right: 3px;
    padding: 0 12px;
}
.fx-box i {
    color: #666;
    font-family: "Liberation Serif", serif;
    font-size: 14px;
    font-weight: bold;
}
.formula {
    flex: 1;
    min-width: 0;
    border-right: none;
}
.sheet {
    width: 100%;
    min-width: 734px;
    table-layout: fixed;
    border-spacing: 0;
    background: #fff;
    font-size: 14px;
    line-height: 17px;
}
.sheet th, .sheet td {
    height: 19px;
    padding: 0 2px;
    border-right: 1px solid #d4d4d4;
    border-bottom: 1px solid #d4d4d4;
    text-align: left;
    white-space: nowrap;
}
.sheet th {
    border-color: #c0c0c0;
    background: #e6e6e6;
    color: #444;
    font-weight: normal;
    text-align: center;
}
.sheet thead th, .sheet tbody th {
    border-right-color: #a8a8a8;
}
.sheet thead th {
    border-bottom-color: #999;
}
.sheet .corner {
    background: linear-gradient(135deg, #e6e6e6 50%, #b4b4b4 50%) 16px 4px / 10px 10px no-repeat #e6e6e6;
}
.sheet .num {
    text-align: right;
}
.sheet .txt {
    background: linear-gradient(135deg, #107c10 50%, transparent 50%) 0 0 / 6px 6px no-repeat;
}
.sheet .sel {
    background: #d2d2d2;
    color: #217346;
}
.sheet thead .sel {
    border-bottom: 2px solid #217346;
}
.sheet tbody .sel {
    border-right: 2px solid #217346;
}
.sheet .cursor {
    border-color: transparent;
    outline: 2px solid #217346;
}
.s-no { width: 29px; }
.s-a { width: 72px; }
.s-b { width: 115px; }
.s-c { width: 82px; }
.s-d { width: 68px; }
.s-e { width: 90px; }
.s-f { width: 134px; }
.s-g { width: 72px; }

.mark {
    position: absolute;
    border: 3px solid #f31cf0;
}
.mark-grid {
    top: 335px;
    left: 365px;
    width: 564px;
    height: 40px;
}
.mark-sheet {
    top: 506px;
    left: 351px;
    width: 542px;
    height: 51px;
}
```
